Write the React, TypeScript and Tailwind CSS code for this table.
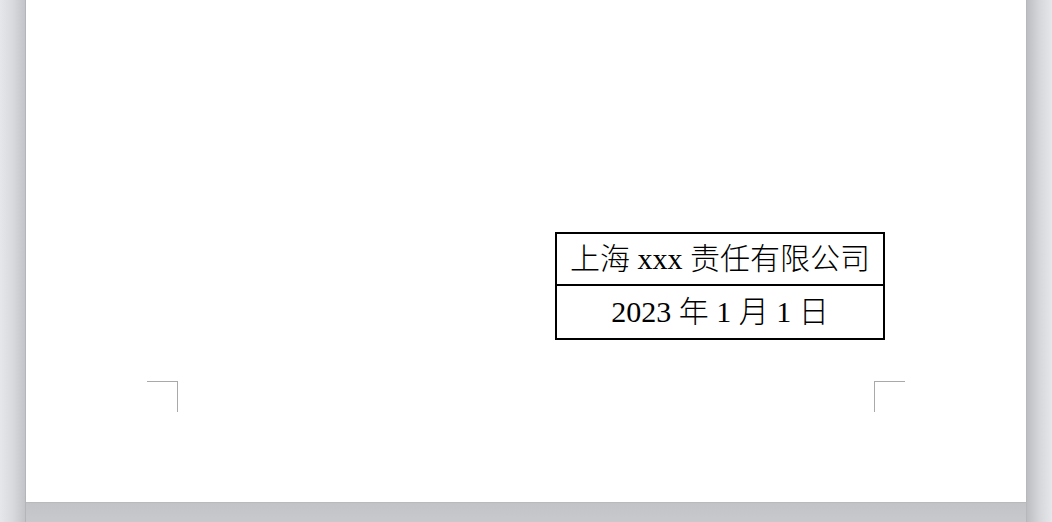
import React from "react";

export default function App() {
  const font = { fontFamily: "'Liberation Serif', 'Noto Sans CJK SC', serif" };
  return (
    <div className="w-[1052px] h-[522px] flex overflow-hidden bg-[#c6c7ca]">
      <div className="w-[26px] h-full bg-gradient-to-r from-[#e6e7ea] via-[#d9dadd] to-[#c3c4c7] border-r border-[#b4b5b8]" />
      <div className="w-[1000px] h-full flex flex-col">
        <div className="h-[503px] bg-white border-b border-[#b9babc] flex flex-col">
          <div className="ml-[529px] mt-[232px] w-[330px] border-2 border-black text-black text-[30px] leading-none" style={font}>
            <div className="h-[52px] flex items-center justify-center border-b-2 border-black">
              <span className="font-light">上海 xxx 责任有限公司</span>
            </div>
            <div className="h-[52px] flex items-center justify-center">
              <span className="font-light">2023 年 1 月 1 日</span>
            </div>
          </div>
          <div className="mt-[41px] flex">
            <div className="ml-[121px] w-[31px] h-[31px] border-t border-r border-[#a9a9a9]" />
            <div className="ml-[696px] w-[31px] h-[31px] border-t border-l border-[#a9a9a9]" />
          </div>
        </div>
        <div className="flex-1 bg-gradient-to-b from-[#c2c3c6] to-[#c8c9cc]" />
      </div>
      <div className="w-[26px] h-full bg-gradient-to-r from-[#bdbec1] via-[#d6d7da] to-[#e6e7ea] border-l border-[#b7b8bb]" />
    </div>
  );
}
